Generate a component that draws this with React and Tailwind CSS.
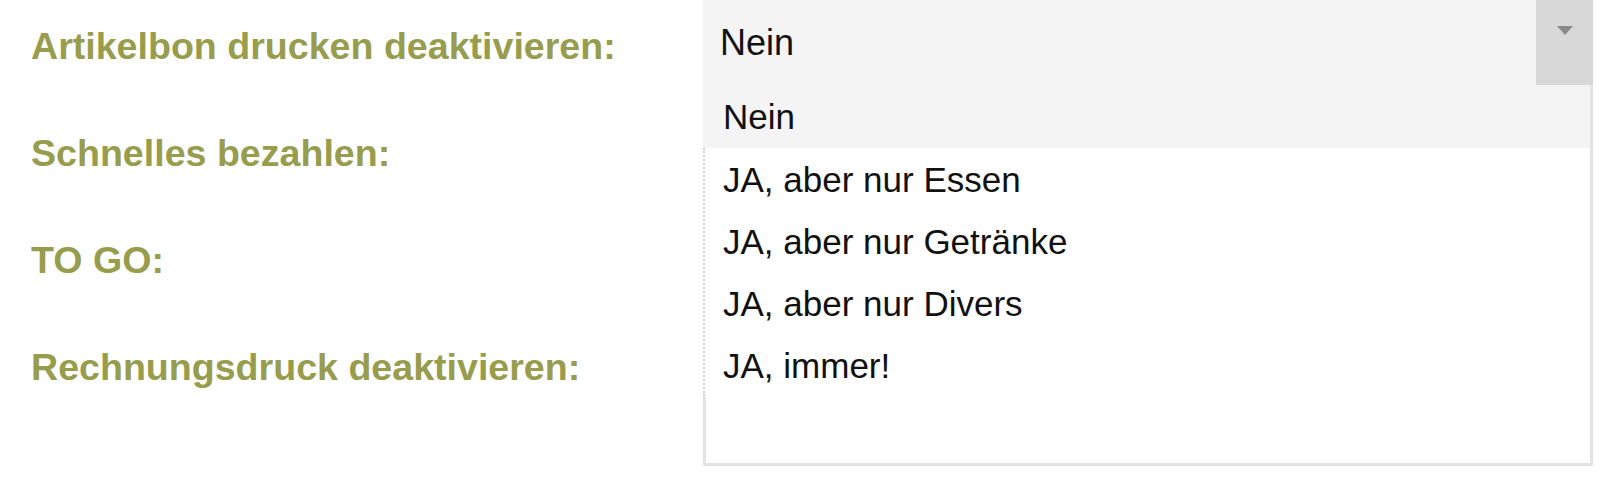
import React from "react";

const labels = [
  "Artikelbon drucken deaktivieren:",
  "Schnelles bezahlen:",
  "TO GO:",
  "Rechnungsdruck deaktivieren:",
];

const options = [
  "JA, aber nur Essen",
  "JA, aber nur Getränke",
  "JA, aber nur Divers",
  "JA, immer!",
];

export default function App() {
  return (
    <div
      className="w-[1620px] h-[485px] overflow-hidden bg-white flex"
      style={{ fontFamily: '"Liberation Sans", Arial, sans-serif' }}
    >
      <div className="w-[703px] pl-[31px] pt-[28px] flex flex-col gap-[70px]">
        {labels.map((l) => (
          <div
            key={l}
            className="text-[37.6px] leading-[37px] font-bold text-[#979d4d] whitespace-nowrap"
          >
            {l}
          </div>
        ))}
      </div>
      <div className="relative w-[890px] h-[85px]">
        <div className="flex h-[85px] bg-[#f4f4f4]">
          <div className="flex-1 flex items-center pl-[17px] text-[36px] leading-[36px] text-[#111]">
            Nein
          </div>
          <div className="w-[57px] bg-[#d8d8d8] flex justify-center pt-[26px]">
            <svg width="16" height="9" viewBox="0 0 16 9">
              <path d="M0 0 L16 0 L8 9 Z" fill="#8a8a8a" />
            </svg>
          </div>
        </div>
        <div className="absolute top-[85px] left-0 right-0 bg-white border-r-[3px] border-b-[3px] border-[#e3e3e3] text-[35px] leading-[35px] text-[#111]">
          <div className="h-[63px] bg-[#f4f4f4] flex items-center pl-[20px]">
            Nein
          </div>
          <div className="border-l-2 border-dotted border-[#cfcfcf]">
            {options.map((o) => (
              <div key={o} className="h-[62px] flex items-center pl-[18px]">
                {o}
              </div>
            ))}
          </div>
          <div className="h-[67px] border-l-[3px] border-[#e3e3e3]" />
        </div>
      </div>
    </div>
  );
}
